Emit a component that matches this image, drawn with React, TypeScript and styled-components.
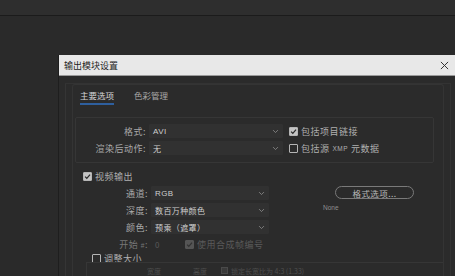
import React from "react";
import styled, { createGlobalStyle } from "styled-components";

const Global = createGlobalStyle`
  html, body { margin: 0; padding: 0; background: #2a2a2a; overflow: hidden; }
  body { font-family: "Noto Sans CJK SC", "Noto Sans", sans-serif; }
`;

const Page = styled.div`
  width: 455px;
  height: 276px;
  background: #2a2a2a;
  overflow: hidden;
  display: flex;
  flex-direction: column;
`;

const TopBar = styled.div`
  height: 15px;
  flex: none;
  background: #2e2e2e;
  border-bottom: 1px solid #1b1b1b;
`;

const Dialog = styled.div`
  margin: 39px 0 0 59px;
  width: 396px;
  flex: 1;
  background: #2b2b2b;
  display: flex;
  flex-direction: column;
  box-shadow: -1px 0 0 #1e1e1e;
`;

const TitleBar = styled.div`
  height: 20px;
  flex: none;
  background: #e8e8e8;
  border-bottom: 1px solid #9a9a9a;
  display: flex;
  align-items: center;
  justify-content: space-between;
  padding: 0 6px 0 5px;
  font-size: 9px;
  color: #1e1e1e;
`;

const Close = styled.svg`
  width: 9px;
  height: 9px;
`;

const Body = styled.div`
  flex: 1;
  padding: 7px 4px 0 6px;
  display: flex;
`;

const Outer = styled.div`
  flex: 1;
  border-left: 1px solid #353535;
  border-right: 1px solid #333;
  border-top: 1px solid #333;
  padding: 0 6px 0 6px;
  display: flex;
`;

const Panel = styled.div`
  flex: 1;
  border: 1px solid #343434;
  border-bottom: none;
  border-radius: 3px 3px 0 0;
  display: flex;
  flex-direction: column;
  padding: 0 0 0 2px;
`;

const Tabs = styled.div`
  display: flex;
  gap: 20px;
  padding: 4px 0 0 5px;
  height: 20px;
  box-sizing: border-box;
`;

const Tab = styled.div<{ $active?: boolean }>`
  font-size: 8.5px;
  line-height: 12px;
  color: ${(p) => (p.$active ? "#d6d6d6" : "#a8a8a8")};
  height: 14px;
  border-bottom: 2px solid ${(p) => (p.$active ? "#2e5f9e" : "transparent")};
`;

const Group = styled.div`
  margin: 12px 0 0 0;
  border: 1px solid #363636;
  border-radius: 2px;
  padding: 6px 0 7px 0;
  display: flex;
  flex-direction: column;
  gap: 3px;
  width: 357px;
`;

const Row = styled.div`
  display: flex;
  align-items: center;
  height: 14px;
`;

const Label = styled.div<{ $w?: number; $dim?: boolean }>`
  width: ${(p) => p.$w ?? 70}px;
  text-align: right;
  font-size: 9px;
  color: ${(p) => (p.$dim ? "#777" : "#a9a9a9")};
  letter-spacing: 0.5px;
  padding-right: 3px;
  flex: none;
`;

const Select = styled.div<{ $w: number }>`
  width: ${(p) => p.$w}px;
  height: 14px;
  box-sizing: border-box;
  background: #313131;
  border-radius: 1px;
  display: flex;
  align-items: center;
  justify-content: space-between;
  padding: 0 4px 0 4px;
  font-size: 8px;
  color: #cfcfcf;
  letter-spacing: 0.4px;
  flex: none;
`;

const Chevron = styled.svg`
  width: 7px;
  height: 5px;
`;

const Check = styled.div<{ $on?: boolean; $dim?: boolean }>`
  width: 9px;
  height: 9px;
  box-sizing: border-box;
  border: 1px solid ${(p) => (p.$dim ? "#555" : "#b5b5b5")};
  background: ${(p) => (p.$on ? (p.$dim ? "#555" : "#c4c4c4") : "transparent")};
  border-radius: 1px;
  display: flex;
  align-items: center;
  justify-content: center;
  flex: none;
`;

const CheckItem = styled.div<{ $dim?: boolean; $ml?: number }>`
  display: flex;
  align-items: center;
  gap: 3px;
  margin-left: ${(p) => p.$ml ?? 6}px;
  font-size: 9px;
  color: ${(p) => (p.$dim ? "#5a5a5a" : "#b0b0b0")};
  letter-spacing: 0.5px;
`;

const Small = styled.span`
  font-family: "Liberation Sans", sans-serif;
  font-size: 6.5px;
`;

const Section = styled.div`
  display: flex;
  flex-direction: column;
  margin-top: 7px;
`;

const Video = styled.div`
  display: flex;
  margin-top: 3px;
`;

const VideoRows = styled.div`
  display: flex;
  flex-direction: column;
  gap: 3px;
  width: 260px;
`;

const VideoRight = styled.div`
  display: flex;
  flex-direction: column;
  align-items: flex-start;
  padding-top: 0;
  gap: 5px;
`;

const Pill = styled.div`
  width: 79px;
  height: 13px;
  box-sizing: border-box;
  border: 1px solid #7a7a7a;
  border-radius: 7px;
  display: flex;
  align-items: center;
  justify-content: center;
  font-size: 8.5px;
  color: #b8b8b8;
  letter-spacing: 0.4px;
`;

const NoneText = styled.div`
  font-family: "Liberation Sans", sans-serif;
  font-size: 6.5px;
  color: #8e8e8e;
  margin-left: -12px;
`;

const Value = styled.div<{ $dim?: boolean }>`
  font-size: 8px;
  color: ${(p) => (p.$dim ? "#5a5a5a" : "#bbb")};
  padding-left: 4px;
  width: 30px;
`;

const Resize = styled.div`
  display: flex;
  flex-direction: column;
  margin: 1px 0 0 10px;
`;

const ResizeBox = styled.div`
  margin: -3px 0 0 1px;
  border-left: 1px solid #363636;
  border-top: 1px solid #363636;
  height: 20px;
  display: flex;
  align-items: flex-start;
  padding: 4px 0 0 60px;
  font-size: 7px;
  line-height: 8px;
  color: #4e4e4e;
`;

const Dim = styled.span<{ $w: number }>`
  width: ${(p) => p.$w}px;
  flex: none;
`;

const TinyCheck = styled.span`
  width: 7px;
  height: 7px;
  box-sizing: border-box;
  border: 1px solid #4a4a4a;
  background: #3a3a3a;
  margin-right: 3px;
  flex: none;
`;

const Tick = ({ dark }: { dark?: boolean }) => (
  <svg width="7" height="7" viewBox="0 0 10 10">
    <path d="M1.5 5.2 L4 7.6 L8.6 2.2" fill="none" stroke={dark ? "#333" : "#2a2a2a"} strokeWidth="1.8" />
  </svg>
);

const Down = () => (
  <Chevron viewBox="0 0 10 6">
    <path d="M1.5 1 L5 4.5 L8.5 1" fill="none" stroke="#8a8a8a" strokeWidth="1.2" />
  </Chevron>
);

export default function App() {
  return (
    <Page>
      <Global />
      <TopBar />
      <Dialog>
        <TitleBar>
          <span>输出模块设置</span>
          <Close viewBox="0 0 10 10">
            <path d="M1 1 L9 9 M9 1 L1 9" stroke="#333" strokeWidth="1.1" />
          </Close>
        </TitleBar>
        <Body>
          <Outer>
            <Panel>
              <Tabs>
                <Tab $active>主要选项</Tab>
                <Tab>色彩管理</Tab>
              </Tabs>
              <Group>
                <Row>
                  <Label>格式:</Label>
                  <Select $w={134}>
                    <span style={{ fontFamily: "Liberation Sans, sans-serif" }}>AVI</span>
                    <Down />
                  </Select>
                  <CheckItem>
                    <Check $on>
                      <Tick />
                    </Check>
                    包括项目链接
                  </CheckItem>
                </Row>
                <Row>
                  <Label>渲染后动作:</Label>
                  <Select $w={134}>
                    <span>无</span>
                    <Down />
                  </Select>
                  <CheckItem>
                    <Check />
                    包括源 <Small>XMP</Small> 元数据
                  </CheckItem>
                </Row>
              </Group>
              <Section>
                <CheckItem $ml={8}>
                  <Check $on>
                    <Tick />
                  </Check>
                  视频输出
                </CheckItem>
                <Video>
                  <VideoRows>
                    <Row>
                      <Label $w={73}>通道:</Label>
                      <Select $w={118}>
                        <span style={{ fontFamily: "Liberation Sans, sans-serif" }}>RGB</span>
                        <Down />
                      </Select>
                    </Row>
                    <Row>
                      <Label $w={73}>深度:</Label>
                      <Select $w={118}>
                        <span>数百万种颜色</span>
                        <Down />
                      </Select>
                    </Row>
                    <Row>
                      <Label $w={73}>颜色:</Label>
                      <Select $w={118}>
                        <span>预乘（遮罩）</span>
                        <Down />
                      </Select>
                    </Row>
                    <Row>
                      <Label $w={73} $dim>
                        开始 <Small>#</Small>:
                      </Label>
                      <Value $dim>0</Value>
                      <CheckItem $dim $ml={0}>
                        <Check $on $dim>
                          <Tick dark />
                        </Check>
                        使用合成帧编号
                      </CheckItem>
                    </Row>
                  </VideoRows>
                  <VideoRight>
                    <Pill>格式选项...</Pill>
                    <NoneText>None</NoneText>
                  </VideoRight>
                </Video>
                <Resize>
                  <CheckItem $ml={7}>
                    <Check />
                    调整大小
                  </CheckItem>
                  <ResizeBox>
                    <Dim $w={46}>宽度</Dim>
                    <Dim $w={28}>高度</Dim>
                    <TinyCheck />
                    <span>锁定长宽比为 4:3 (1.33)</span>
                  </ResizeBox>
                </Resize>
              </Section>
            </Panel>
          </Outer>
        </Body>
      </Dialog>
    </Page>
  );
}
